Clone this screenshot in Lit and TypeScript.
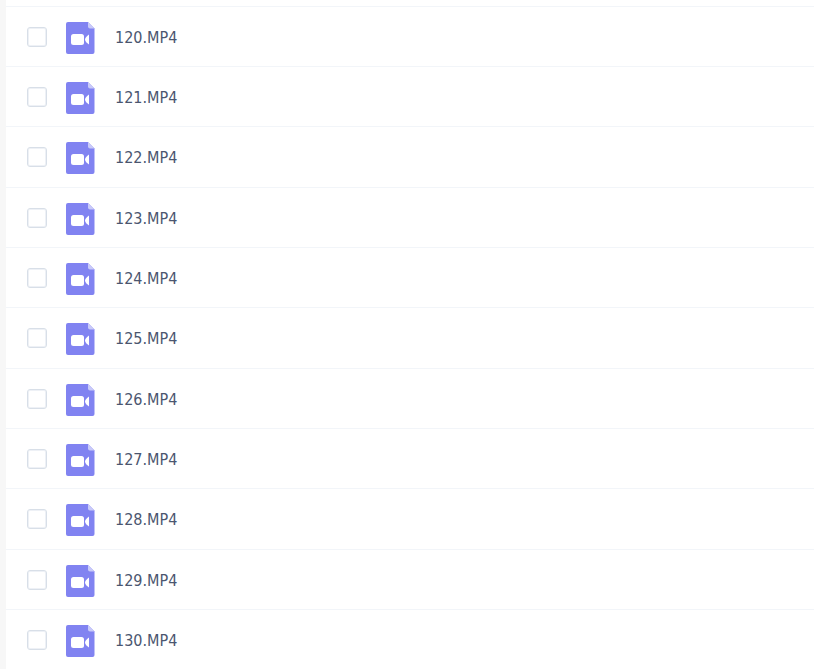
import { LitElement, html, css } from "lit";
import { customElement, property } from "lit/decorators.js";

@customElement("file-row")
class FileRow extends LitElement {
  @property() name = "";

  static styles = css`
    :host {
      display: block;
      box-sizing: border-box;
      border-bottom: 1px solid #f2f5f9;
    }
    .row {
      display: flex;
      align-items: center;
      height: 100%;
      padding: 0 20px;
      cursor: pointer;
    }
    .check {
      appearance: none;
      box-sizing: border-box;
      flex: none;
      width: 20px;
      height: 20px;
      margin: 0 19px 0 1px;
      border: 1px solid #d8dfe8;
      border-radius: 3px;
      background: #fff;
      box-shadow: inset 0 0 0 1px #eef1f6;
    }
    .check:checked {
      background: #8080f0;
      border-color: #8080f0;
    }
    .icon {
      flex: none;
      width: 29px;
      height: 32px;
      margin: 2px 20px 0 0;
    }
    .name {
      color: #4b566f;
      margin-top: 2px;
      font: 16px/20px "DejaVu Sans Condensed", "Noto Sans", sans-serif;
    }
  `;

  render() {
    return html`
      <label class="row">
        <input class="check" type="checkbox" />
        <svg class="icon" viewBox="0 0 29 32" aria-hidden="true">
          <path d="M2 0H22L28.500 6.500V30a2 2 0 0 1-2 2H2a2 2 0 0 1-2-2V2a2 2 0 0 1 2-2z" fill="#8183f1" />
          <path d="M22 0L28.500 6.500H24a2 2 0 0 1-2-2z" fill="#c9caf9" />
          <rect x="5" y="12" width="13" height="11" rx="2.500" fill="#fff" />
          <path d="M23 12.500V22.500C21.500 21.500 19 19.500 19 17.500S21.500 13.500 23 12.500z" fill="#fff" />
        </svg>
        <span class="name">${this.name}</span>
      </label>
    `;
  }
}

@customElement("app-root")
class AppRoot extends LitElement {
  private files = Array.from({ length: 11 }, (_, i) => `${120 + i}.MP4`);

  static styles = css`
    :host {
      display: block;
      box-sizing: border-box;
      height: 100vh;
      overflow: hidden;
      padding-left: 6px;
      background: #f7f7f7;
    }
    .list {
      box-sizing: border-box;
      min-height: 100%;
      background: #fff;
    }
    .lead {
      height: 6px;
      border-bottom: 1px solid #f2f5f9;
    }
    .file {
      height: 60px;
    }
    .file:nth-of-type(3n) {
      height: 61px;
    }
  `;

  render() {
    return html`
      <main class="list">
        <div class="lead"></div>
        ${this.files.map((name) => html`<file-row class="file" .name=${name}></file-row>`)}
      </main>
    `;
  }
}
